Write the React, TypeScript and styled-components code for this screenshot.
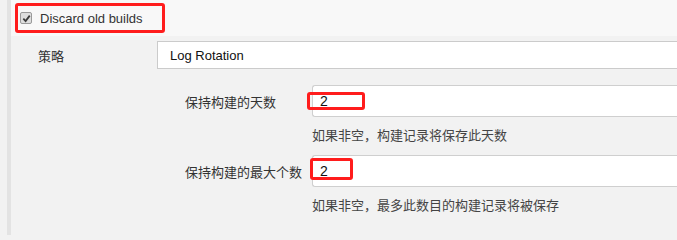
import styled, { createGlobalStyle } from 'styled-components';

const GlobalStyle = createGlobalStyle`
  html, body {
    margin: 0;
    padding: 0;
    overflow: hidden;
    background: #f2f2f2;
  }
  body {
    font-family: 'Liberation Sans', 'Noto Sans CJK SC', sans-serif;
    font-size: 13px;
    color: #333;
  }
`;

interface IMark {
  left: number;
  top: number;
  width: number;
  height: number;
}

const fields = [
  {
    label: '保持构建的天数',
    value: '2',
    help: '如果非空，构建记录将保存此天数',
    mark: { left: -6, top: 6, width: 58, height: 18 },
  },
  {
    label: '保持构建的最大个数',
    value: '2',
    help: '如果非空，最多此数目的构建记录将被保存',
    mark: { left: -3, top: 2, width: 43, height: 22 },
  },
];

export default function App() {
  return (
    <>
      <GlobalStyle />
      <Page>
        <SideBar />
        <Section>
          <Header>
            <CheckLabel>
              <CheckBox>
                <svg width="9" height="9" viewBox="0 0 10 10">
                  <path
                    d="M1.5 5.2 L4 7.8 L8.6 1.8"
                    fill="none"
                    stroke="#3c3c3c"
                    strokeWidth="2"
                  />
                </svg>
              </CheckBox>
              Discard old builds
            </CheckLabel>
          </Header>
          <StrategyRow>
            <Label>策略</Label>
            <Select>Log Rotation</Select>
          </StrategyRow>
          <Nested>
            {fields.map((field, index) => (
              <FieldGroup key={index}>
                <FieldRow>
                  <Label>{field.label}</Label>
                  <Input>
                    {field.value}
                    <Mark {...(field.mark as IMark)} />
                  </Input>
                </FieldRow>
                <Help>{field.help}</Help>
              </FieldGroup>
            ))}
          </Nested>
        </Section>
      </Page>
    </>
  );
}

const Page = styled.div`
  display: flex;
  width: 700px;
  height: 235px;
  padding-left: 7px;
  background: #f2f2f2;
`;

const SideBar = styled.div`
  width: 4px;
  background: #e3e3e3;
`;

const Section = styled.div`
  flex: 1;
  display: flex;
  flex-direction: column;
`;

const Header = styled.div`
  height: 36px;
  background: #f8f8f8;
  padding: 3px 0 0 4px;
  box-sizing: border-box;
`;

const CheckLabel = styled.label`
  display: flex;
  align-items: center;
  gap: 8px;
  width: 150px;
  height: 30px;
  box-sizing: border-box;
  padding-left: 2px;
  border: 3px solid #ff1c1c;
  border-radius: 3px;
  font-size: 13px;
  color: #333;
`;

const CheckBox = styled.span`
  display: flex;
  align-items: center;
  justify-content: center;
  width: 12px;
  height: 12px;
  box-sizing: border-box;
  border: 1px solid #9a9a9a;
  border-radius: 2px;
  background: #dedede;
`;

const StrategyRow = styled.div`
  display: grid;
  grid-template-columns: 119px 1fr;
  align-items: center;
  margin-top: 5px;
  padding-left: 27px;
`;

const Label = styled.div`
  color: #333;
  white-space: nowrap;
`;

const Select = styled.div`
  height: 28px;
  box-sizing: border-box;
  display: flex;
  align-items: center;
  padding-left: 12px;
  border: 1px solid #cbcbcb;
  border-right: none;
  background: #fff;
  color: #111;
  font-size: 13px;
`;

const Nested = styled.div`
  display: flex;
  flex-direction: column;
  margin-top: 16px;
  padding-left: 174px;
`;

const FieldGroup = styled.div`
  display: flex;
  flex-direction: column;
`;

const FieldRow = styled.div`
  display: grid;
  grid-template-columns: 127px 1fr;
  align-items: center;
`;

const Input = styled.div`
  position: relative;
  height: 32px;
  box-sizing: border-box;
  display: flex;
  align-items: center;
  padding-left: 7px;
  border: 1px solid #cfcfcf;
  border-right: none;
  border-radius: 3px 0 0 3px;
  background: #fff;
  color: #111;
  font-size: 14px;
`;

const Mark = styled.span<IMark>`
  position: absolute;
  left: ${({ left }) => left}px;
  top: ${({ top }) => top}px;
  width: ${({ width }) => width}px;
  height: ${({ height }) => height}px;
  box-sizing: border-box;
  border: 3px solid #ff1c1c;
  border-radius: 3px;
`;

const Help = styled.div`
  margin-left: 127px;
  height: 38px;
  box-sizing: border-box;
  padding-top: 10px;
  line-height: 18px;
  color: #444;
`;
